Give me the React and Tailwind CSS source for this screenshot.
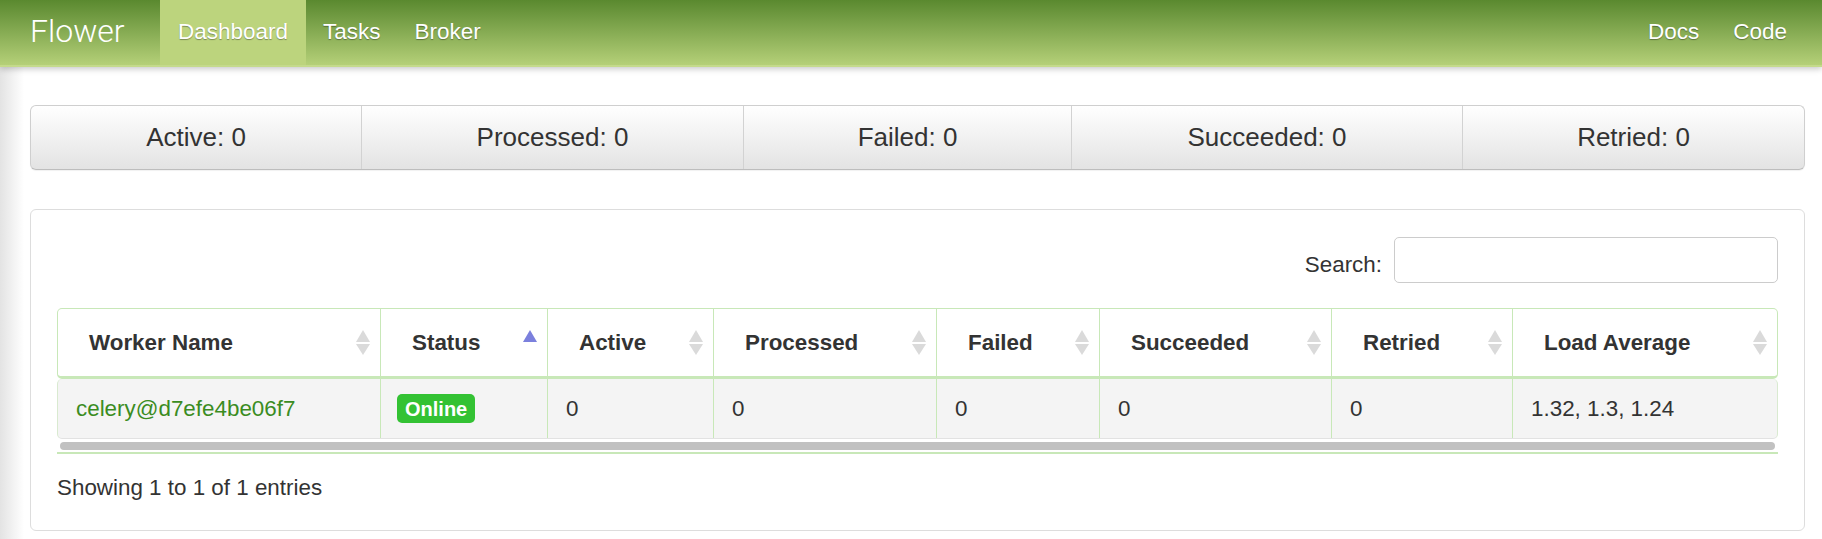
import React from "react";

const stats = [
    { label: "Active", value: 0, width: "w-[330px]" },
    { label: "Processed", value: 0, width: "w-[382px]" },
    { label: "Failed", value: 0, width: "w-[328px]" },
    { label: "Succeeded", value: 0, width: "w-[391px]" },
    { label: "Retried", value: 0, width: "flex-1" },
];

const columns = [
    { title: "Worker Name", sort: "none" },
    { title: "Status", sort: "asc" },
    { title: "Active", sort: "none" },
    { title: "Processed", sort: "none" },
    { title: "Failed", sort: "none" },
    { title: "Succeeded", sort: "none" },
    { title: "Retried", sort: "none" },
    { title: "Load Average", sort: "none" },
];

const grid = "grid grid-cols-[322px_167px_166px_223px_163px_232px_181px_1fr]";

function SortIcon({ sort }) {
    const up = sort === "asc" ? "#7b80dd" : "#dadada";
    const down = sort === "asc" ? "transparent" : "#dadada";
    return (
        <svg width="14" height="25" viewBox="0 0 14 25" className="ml-auto mr-[10px] shrink-0">
            <polygon points="7,0 14,12 0,12" fill={up} />
            <polygon points="0,14 14,14 7,25" fill={down} />
        </svg>
    );
}

function Navbar() {
    const tab = "flex items-center px-[17px] pb-[2px] text-white [text-shadow:0_1px_1px_rgba(0,0,0,0.35)]";
    return (
        <nav className="relative z-10 flex h-[67px] items-stretch border-b-2 border-[#c4da8b] bg-gradient-to-b from-[#5a892f] to-[#b5d078] text-[22.5px] shadow-[0_2px_6px_rgba(0,0,0,0.22)]">
            <div className="flex w-[160px] items-center pl-[30px] pb-[4px] font-['Roboto',sans-serif] text-[32px] font-light text-white">
                Flower
            </div>
            <a className={`${tab} bg-[#bcd47d] px-[18px]`}>Dashboard</a>
            <a className={tab}>Tasks</a>
            <a className={tab}>Broker</a>
            <div className="ml-auto flex pr-[18px]">
                <a className={tab}>Docs</a>
                <a className={tab}>Code</a>
            </div>
        </nav>
    );
}

function StatsBar() {
    return (
        <div className="flex h-[65px] overflow-hidden rounded-[6px] border border-[#cfcfcf] border-b-[#bdbdbd] bg-gradient-to-b from-[#ffffff] to-[#e3e3e3] text-[26px] text-[#333] shadow-[0_1px_1px_rgba(0,0,0,0.06)]">
            {stats.map((s, i) => (
                <div
                    key={s.label}
                    className={`${s.width} flex items-center justify-center ${i > 0 ? "border-l border-[#d2d2d2]" : ""}`}
                >
                    {s.label}: {s.value}
                </div>
            ))}
        </div>
    );
}

function WorkersTable() {
    return (
        <div>
            {/* Header */}
            <div className={`${grid} h-[71px] rounded-[5px] border border-b-[3px] border-[#c8e8b8] bg-white`}>
                {columns.map((c, i) => (
                    <div
                        key={c.title}
                        className={`flex items-center pl-[31px] font-bold text-[22.4px] text-[#333] ${i > 0 ? "border-l border-[#c8e8b8]" : ""}`}
                    >
                        <span>{c.title}</span>
                        <SortIcon sort={c.sort} />
                    </div>
                ))}
            </div>

            {/* Row */}
            <div className={`${grid} h-[60px] rounded-[5px] border border-t-0 border-[#d9ead0] border-b-[#e2e2e2] bg-[#f4f4f4] text-[22.4px] text-[#333]`}>
                <div className="flex items-center pl-[18px]">
                    <a className="text-[#3b8c1f]">celery@d7efe4be06f7</a>
                </div>
                <div className="flex items-center border-l border-[#c8e8b8] pl-[16px]">
                    <span className="flex h-[29px] items-center rounded-[5px] bg-[#33c233] px-[8px] text-[20px] font-bold text-white">
                        Online
                    </span>
                </div>
                {["0", "0", "0", "0", "0", "1.32, 1.3, 1.24"].map((v, i) => (
                    <div key={i} className="flex items-center border-l border-[#c8e8b8] pl-[18px]">
                        {v}
                    </div>
                ))}
            </div>

            {/* Horizontal scrollbar */}
            <div className="h-[15px] border-b-2 border-[#c8e8b8] px-[3px] pt-[3px]">
                <div className="h-[8px] rounded-full bg-[#c1c1c1]" />
            </div>
        </div>
    );
}

export default function App() {
    return (
        <div className="min-h-screen w-full bg-white font-['Liberation_Sans',Arial,sans-serif] text-[#333]">
            <Navbar />
            <main className="bg-[linear-gradient(to_right,#e3e3e3,#ffffff_24px)] pb-[8px] pl-[30px] pr-[17px] pt-[38px]">
                <StatsBar />

                <div className="mt-[39px] h-[322px] rounded-[6px] border border-[#dddddd] bg-white px-[26px] pt-[27px]">
                    <div className="flex items-center justify-end gap-[12px] text-[22.4px]">
                        <label className="mt-[10px]">Search:</label>
                        <input className="h-[46px] w-[384px] rounded-[5px] border border-[#cccccc] px-[10px] outline-none" />
                    </div>

                    <div className="mt-[25px]">
                        <WorkersTable />
                    </div>

                    <div className="mt-[21px] text-[22.4px] leading-[26px]">Showing 1 to 1 of 1 entries</div>
                </div>
            </main>
        </div>
    );
}
